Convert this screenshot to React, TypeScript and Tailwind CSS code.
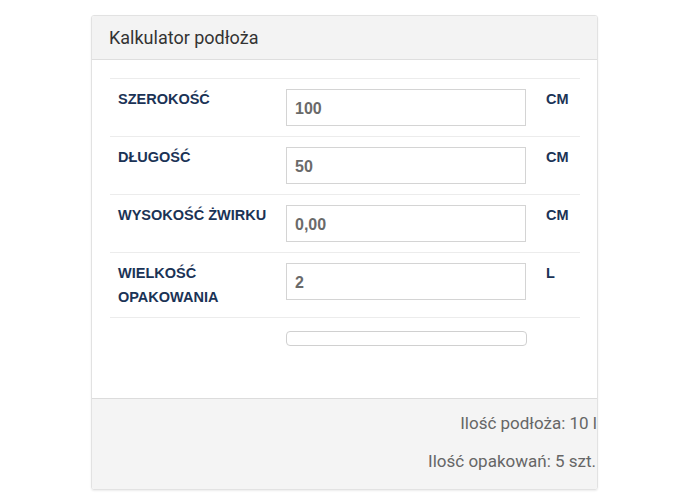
import React from 'react';

const rows = [
  { label: 'SZEROKOŚĆ', value: '100', unit: 'CM' },
  { label: 'DŁUGOŚĆ', value: '50', unit: 'CM' },
  { label: 'WYSOKOŚĆ ŻWIRKU', value: '0,00', unit: 'CM' },
  { label: 'WIELKOŚĆ OPAKOWANIA', value: '2', unit: 'L' },
];

export default function App() {
  return (
    <div className="w-[695px] h-[494px] bg-white pt-[15px] pl-[91px]">
      <div className="w-[507px] h-[475px] border border-[#e2e2e2] rounded-[3px] shadow-[0_1px_2px_rgba(0,0,0,0.08)] overflow-hidden flex flex-col">
        {/* header */}
        <div className="h-[44px] bg-[#f3f3f3] border-b border-[#dedede] pl-[17px] flex items-center">
          <span className="font-['Roboto',sans-serif] text-[18px] text-[#333]">Kalkulator podłoża</span>
        </div>

        {/* body */}
        <div className="flex-1 bg-white pt-[18px] pl-[18px] pr-[17px]">
          <table className="w-[470px] border-collapse font-['Liberation_Sans',Arial,sans-serif]">
            <tbody>
              {rows.map(r => (
                <tr key={r.label} className="border-t border-[#ececec] align-top">
                  <td className="w-[168px] pl-[8px] pt-[8px] pb-[8px] text-[14.5px] leading-[24px] font-bold text-[#1b3356]">
                    {r.label === 'WIELKOŚĆ OPAKOWANIA' ? <>WIELKOŚĆ<br />OPAKOWANIA</> : r.label}
                  </td>
                  <td className="w-[256px] px-[8px] pt-[10px] pb-[10px]">
                    <div className="w-[240px] h-[37px] border border-[#d4d4d4] flex items-center pl-[8px] pt-[3px] text-[16px] font-bold text-[#6a6a6a]">
                      {r.value}
                    </div>
                  </td>
                  <td className="pl-[11px] pt-[8px] text-[14.5px] leading-[24px] font-bold text-[#1b3356]">{r.unit}</td>
                </tr>
              ))}
              <tr className="border-t border-[#ececec]">
                <td />
                <td className="px-[8px] pt-[13px]">
                  <div className="w-[241px] h-[15px] border border-[#d0d0d0] rounded-[4px] bg-white" />
                </td>
                <td />
              </tr>
            </tbody>
          </table>
        </div>

        {/* footer */}
        <div className="h-[91px] bg-[#f4f4f4] border-t border-[#dcdcdc] flex flex-col items-end pr-[1px] pt-[12px] gap-[14px] font-['Roboto',sans-serif] text-[17px] text-[#666] leading-[24px] whitespace-nowrap">
          <span className="-mr-[1px]">Ilość podłoża: 10 l</span>
          <span>Ilość opakowań: 5 szt.</span>
        </div>
      </div>
    </div>
  );
}
